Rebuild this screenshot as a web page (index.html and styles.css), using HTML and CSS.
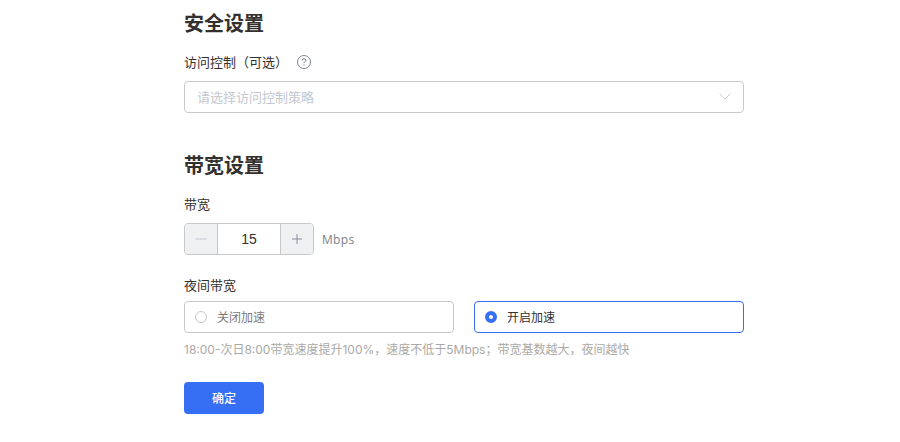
FILE: index.html
```html
<!DOCTYPE html>
<html lang="zh-CN">
<head>
<meta charset="utf-8">
<title>设置</title>
<link rel="stylesheet" href="styles.css">
</head>
<body>
<main class="form">
  <h2 class="section-title">安全设置</h2>
  <div class="label label-help">
    <span>访问控制（可选）</span>
    <svg class="help" width="16" height="16" viewBox="0 0 16 16" fill="none">
      <circle cx="8" cy="8" r="6.5" stroke="#7f8496"/>
      <path d="M6.200 6.400c0-1 .8-1.700 1.800-1.700s1.800.7 1.800 1.600c0 1.300-1.800 1.400-1.800 2.900" stroke="#5f6474" fill="none"/>
      <rect x="7.500" y="10.500" width="1" height="1" fill="#5f6474"/>
    </svg>
  </div>
  <div class="select">
    <span class="placeholder">请选择访问控制策略</span>
    <svg width="12" height="7" viewBox="0 0 12 7" fill="none"><path d="M.7.7 6 6l5.300-5.300" stroke="#c5cad8"/></svg>
  </div>

  <h2 class="section-title second">带宽设置</h2>
  <div class="label band-label">带宽</div>
  <div class="stepper-row">
    <div class="stepper">
      <div class="step">
        <svg width="12" height="12" viewBox="0 0 12 12"><path d="M.500 6h11" stroke="#c4c7ce"/></svg>
      </div>
      <div class="value">15</div>
      <div class="step">
        <svg width="12" height="12" viewBox="0 0 12 12"><path d="M1 6h10M6 1v10" stroke="#8b909c"/></svg>
      </div>
    </div>
    <span class="unit">Mbps</span>
  </div>

  <div class="label night-label">夜间带宽</div>
  <div class="radios">
    <div class="radio"><span class="dot"></span><span>关闭加速</span></div>
    <div class="radio radio-on"><span class="dot dot-on"></span><span>开启加速</span></div>
  </div>
  <p class="hint">18:00-次日8:00带宽速度提升100%，速度不低于5Mbps；带宽基数越大，夜间越快</p>
  <button class="submit" type="button">确定</button>
</main>
</body>
</html>
```

FILE: styles.css
```css
* { box-sizing: border-box; }
html, body { margin: 0; padding: 0; background: #fff; }
body {
  height: 442px;
  overflow: hidden;
  font-family: "Open Sans", "Noto Sans CJK SC", sans-serif;
  font-size: 13px;
  color: #33302e;
}
.form { width: 560px; margin-left: 184px; padding-top: 9px; }
.section-title {
  margin: 0;
  font-size: 20px;
  line-height: 28px;
  font-weight: 700;
  font-family: "Noto Sans CJK SC", sans-serif;
  color: #33302e;
}
.section-title.second { margin-top: 38px; }
.label { line-height: 20px; font-family: "Noto Sans CJK SC", sans-serif; }
.label-help { display: flex; align-items: center; gap: 8px; margin-top: 15px; }
.select {
  display: flex;
  align-items: center;
  justify-content: space-between;
  height: 32px;
  margin-top: 9px;
  padding: 0 12px 2px;
  border: 1px solid #c8c8c8;
  border-radius: 4px;
}
.placeholder { color: #c4c8d2; font-family: "Noto Sans CJK SC", sans-serif; }
.band-label { margin-top: 15px; }
.stepper-row { display: flex; align-items: center; gap: 8px; margin-top: 9px; }
.stepper {
  display: flex;
  width: 130px;
  height: 32px;
  border: 1px solid #c8c8c8;
  border-radius: 4px;
  overflow: hidden;
}
.step {
  display: flex;
  align-items: center;
  justify-content: center;
  width: 32px;
  background: #eef0f2;
}
.value {
  flex: 1;
  border-left: 1px solid #c8c8c8;
  border-right: 1px solid #c8c8c8;
  text-align: center;
  line-height: 30px;
  font-size: 14px;
  font-family: "Liberation Sans", sans-serif;
}
.unit { color: #7d8088; font-size: 12px; letter-spacing: .3px; }
.night-label { margin-top: 20px; }
.radios { display: flex; gap: 20px; margin-top: 6px; }
.radio {
  flex: 1;
  display: flex;
  align-items: center;
  gap: 10px;
  height: 32px;
  padding: 0 0 2px 10px;
  border: 1px solid #c8c8c8;
  border-radius: 4px;
  color: #7d7a76;
  font-family: "Noto Sans CJK SC", sans-serif;
  font-size: 12px;
}
.radio-on { border-color: #366ef4; color: #33302e; }
.dot {
  width: 12px;
  height: 12px;
  margin-top: 2px;
  border: 1px solid #c8c8c8;
  border-radius: 50%;
  background: #fff;
}
.dot-on { border: 4px solid #366ef4; }
.hint {
  margin: 7px 0 0;
  line-height: 20px;
  color: #aaa9a6;
  font-size: 12px;
  font-family: Inter, "Noto Sans CJK SC", sans-serif;
}
.submit {
  display: block;
  width: 80px;
  height: 32px;
  margin-top: 22px;
  padding: 0 0 2px;
  border: 0;
  border-radius: 4px;
  background: #366ef4;
  color: #fff;
  font-size: 12px;
  font-weight: 500;
  font-family: "Noto Sans CJK SC", sans-serif;
}
```
